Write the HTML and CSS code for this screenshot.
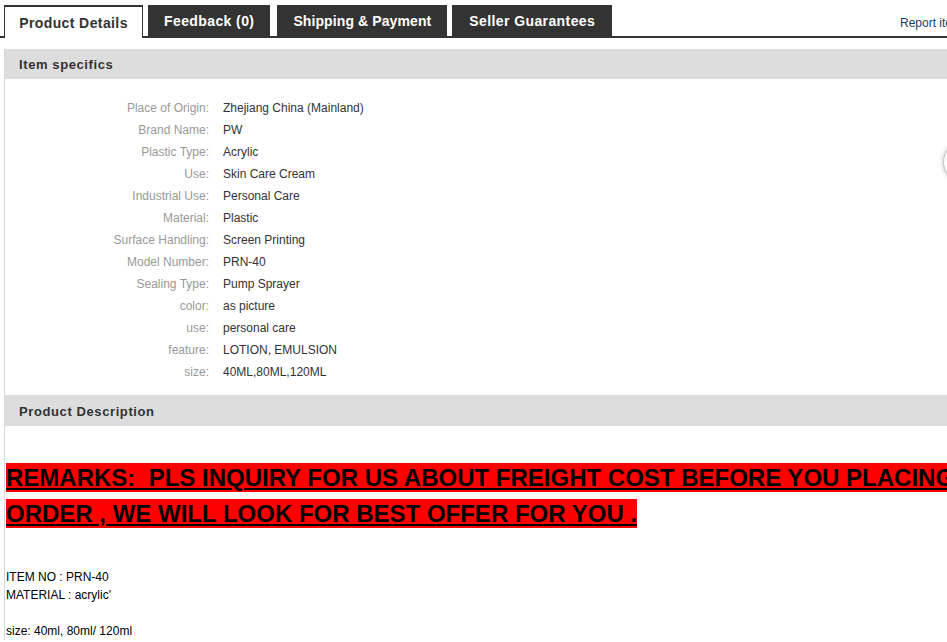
FILE: index.html
```html
<!DOCTYPE html>
<html lang="en">
<head>
<meta charset="utf-8">
<title>Product Details</title>
<link rel="stylesheet" href="styles.css">
</head>
<body>
<div class="page">
  <div class="tabbar">
    <ul class="tabs">
      <li class="tab tab-active">Product Details</li>
      <li class="tab tab-feedback">Feedback (0)</li>
      <li class="tab tab-shipping">Shipping &amp; Payment</li>
      <li class="tab tab-guarantee">Seller Guarantees</li>
    </ul>
    <a class="report" href="#">Report item</a>
  </div>

  <div class="detail">
    <h3 class="section-head">Item specifics</h3>
    <dl class="specs">
      <dt>Place of Origin:</dt><dd>Zhejiang China (Mainland)</dd>
      <dt>Brand Name:</dt><dd>PW</dd>
      <dt>Plastic Type:</dt><dd>Acrylic</dd>
      <dt>Use:</dt><dd>Skin Care Cream</dd>
      <dt>Industrial Use:</dt><dd>Personal Care</dd>
      <dt>Material:</dt><dd>Plastic</dd>
      <dt>Surface Handling:</dt><dd>Screen Printing</dd>
      <dt>Model Number:</dt><dd>PRN-40</dd>
      <dt>Sealing Type:</dt><dd>Pump Sprayer</dd>
      <dt>color:</dt><dd>as picture</dd>
      <dt>use:</dt><dd>personal care</dd>
      <dt>feature:</dt><dd>LOTION, EMULSION</dd>
      <dt>size:</dt><dd>40ML,80ML,120ML</dd>
    </dl>

    <h3 class="section-head section-head-desc">Product Description</h3>
    <div class="description">
      <p class="remarks"><span class="remarks-mark">REMARKS:&nbsp; PLS INQUIRY FOR US ABOUT FREIGHT COST BEFORE YOU PLACING ORDER , WE WILL LOOK FOR BEST OFFER FOR YOU .</span></p>
      <p class="plain">ITEM NO : PRN-40<br>MATERIAL : acrylic'<br><br>size: 40ml, 80ml/ 120ml</p>
    </div>
  </div>

  <div class="float-btn"></div>
</div>
</body>
</html>
```

FILE: styles.css
```css
html, body {
  margin: 0;
  padding: 0;
  background: #fff;
  overflow: hidden;
}

body {
  font-family: "Liberation Sans", Arial, sans-serif;
  font-size: 12px;
  color: #333;
}

.page {
  position: relative;
  width: 975px;
}

/* tab strip */
.tabbar {
  display: flex;
  align-items: flex-end;
  padding-top: 5px;
  border-bottom: 2px solid #333;
}

.tabs {
  display: flex;
  align-items: flex-end;
  list-style: none;
  margin: 0;
  padding: 0;
}

.tab {
  height: 31px;
  line-height: 33px;
  padding: 0 16px;
  background: #333;
  color: #fff;
  font-weight: bold;
  font-size: 14px;
  letter-spacing: 0.4px;
  box-sizing: border-box;
}

.tab-active {
  position: relative;
  margin-left: 4px;
  margin-bottom: -2px;
  width: 139px;
  height: 33px;
  line-height: 33px;
  padding: 0;
  text-align: center;
  background: #fff;
  color: #333;
  border: 1px solid #333;
  border-top-width: 2px;
  border-bottom: none;
}

.tab-feedback { margin-left: 5px; }
.tab-shipping { margin-left: 7px; letter-spacing: 0.1px; }
.tab-guarantee { margin-left: 5px; padding: 0 17px; }

.report {
  margin-left: auto;
  margin-right: 13px;
  align-self: flex-end;
  line-height: 14px;
  padding-bottom: 6px;
  color: #1a3c66;
  text-decoration: none;
  font-size: 12px;
}

/* detail body */
.detail {
  margin-left: 4px;
  margin-top: 11px;
  border-left: 1px solid #d6d6d6;
}

.section-head {
  margin: 0;
  height: 30px;
  line-height: 31px;
  padding-left: 14px;
  background: #dddddd;
  color: #333;
  font-size: 13px;
  font-weight: bold;
  letter-spacing: 0.6px;
}

.section-head-desc {
  height: 31px;
  line-height: 33px;
}

.specs {
  display: grid;
  grid-template-columns: 204px 1fr;
  column-gap: 14px;
  margin: 0;
  padding: 18px 0 12px;
  line-height: 22px;
}

.specs dt {
  text-align: right;
  color: #999;
}

.specs dd {
  margin: 0;
  color: #333;
}

.description {
  padding-left: 1px;
}

.remarks {
  margin: 34px 0 0;
  font-size: 24px;
  line-height: 36px;
  font-weight: bold;
  color: #000;
}

.remarks-mark {
  background: #ff0000;
  padding: 1px 0;
  text-decoration: underline;
}

.plain {
  margin: 36px 0 0;
  font-size: 12px;
  line-height: 18px;
  color: #000;
}

/* round floating button at the right edge */
.float-btn {
  position: absolute;
  left: 943px;
  top: 142px;
  width: 38px;
  height: 38px;
  border-radius: 50%;
  background: #fff;
  border: 1px solid #c4c4c4;
  box-shadow: 0 0 5px rgba(0, 0, 0, 0.25);
}
```
